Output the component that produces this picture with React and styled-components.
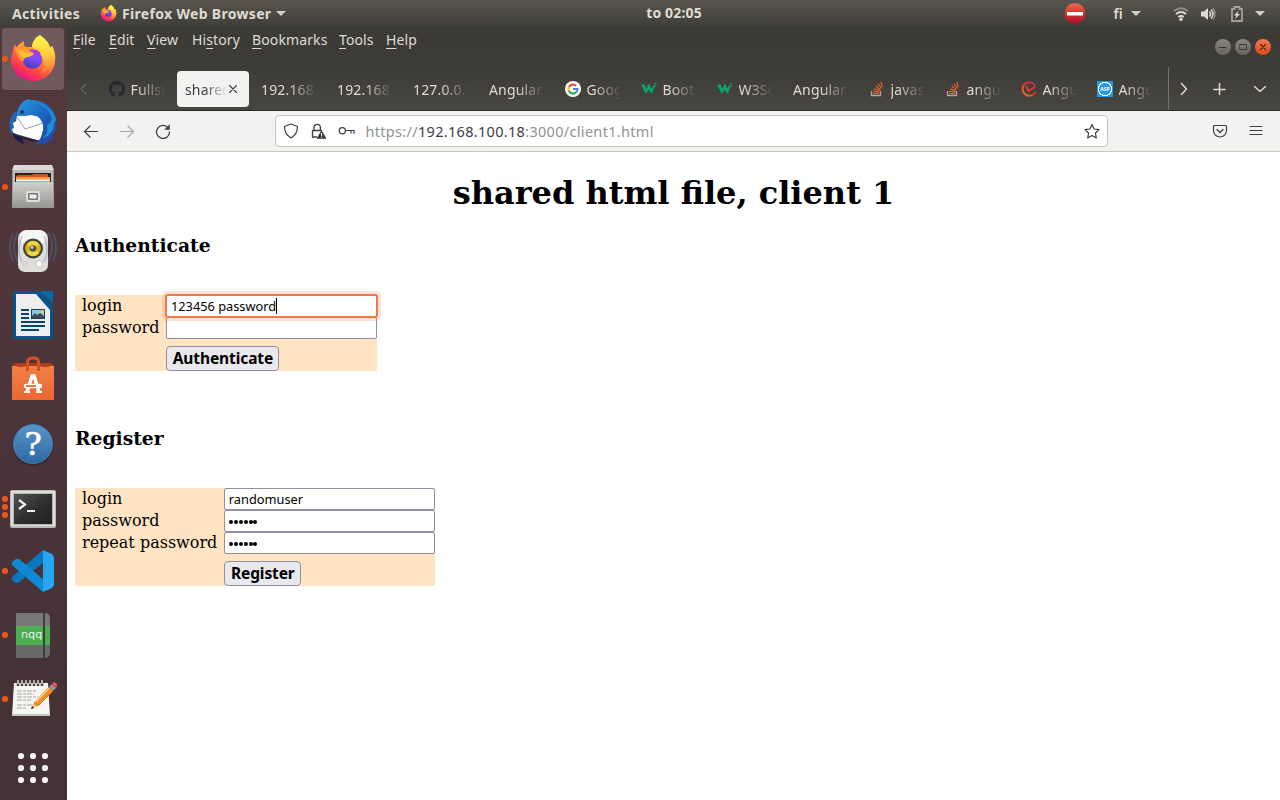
import React from "react";
import styled, { createGlobalStyle } from "styled-components";

const ui = `"Noto Sans", "Open Sans", sans-serif`;

const GlobalStyle = createGlobalStyle`
  *, *::before, *::after { box-sizing: border-box; }
  body { margin: 0; overflow: hidden; background: #fff; font-family: ${ui}; }
  svg { display: block; flex: none; }
`;

const Desktop = styled.div`
  display: flex;
  flex-direction: column;
  width: 1280px;
  height: 800px;
`;

/* ---------- top panel ---------- */
const TopPanel = styled.header`
  display: grid;
  grid-template-columns: 1fr auto 1fr;
  height: 27px;
  background: linear-gradient(#58554c, #3f3e39);
  color: #dfdbd2;
  font: 700 14px/27px ${ui};
`;
const PanelGroup = styled.div`
  display: flex;
  align-items: center;
  justify-content: ${(p) => (p.$end ? "flex-end" : "flex-start")};
  padding: ${(p) => (p.$end ? "0 15px 0 0" : "0 0 0 12px")};
`;
const PanelText = styled.span`
  white-space: nowrap;
  letter-spacing: ${(p) => p.$track || 0}px;
  margin-left: ${(p) => p.$left || 0}px;
  font-weight: ${(p) => p.$weight || 700};
`;
const Clock = styled(PanelText)`
  margin-left: 68px;
  line-height: 26px;
`;
const Caret = styled.i`
  margin-left: ${(p) => p.$left}px;
  border: 5px solid transparent;
  border-top-color: #d3cfc6;
  border-bottom: 0;
`;
const Spacer = styled.span`
  flex: none;
  width: ${(p) => p.$w}px;
`;

/* ---------- dock ---------- */
const Body = styled.div`
  display: flex;
  flex: 1;
  min-height: 0;
`;
const Dock = styled.nav`
  display: flex;
  flex-direction: column;
  width: 67px;
  background: linear-gradient(175deg, #54393b, #4a3439 55%, #423136);
`;
const Slot = styled.div`
  position: relative;
  display: flex;
  align-items: center;
  justify-content: center;
  height: 62px;
  width: 62px;
  flex: none;
  margin: 1px 0 1px 2px;
  border-radius: 4px;
  background: ${(p) => (p.$active ? "#705a5d" : "transparent")};
  &:last-child { margin-top: auto; }
`;
const Dots = styled.div`
  position: absolute;
  left: 0;
  top: 0;
  height: 100%;
  display: flex;
  flex-direction: column;
  justify-content: center;
  gap: 2.5px;
`;
const Dot = styled.i`
  width: 5.6px;
  height: 5.6px;
  border-radius: 50%;
  background: #e95420;
`;

/* ---------- browser ---------- */
const Browser = styled.main`
  display: flex;
  flex-direction: column;
  flex: 1;
  min-width: 0;
`;
const Chrome = styled.div`
  height: 84px;
  background: linear-gradient(#3b3a35, #3e3c38 50%, #474640);
  border-bottom: 1px solid #2b2a27;
`;
const MenuRow = styled.div`
  display: flex;
  justify-content: space-between;
  height: 40px;
  padding: 1px 9px 0 6px;
`;
const MenuList = styled.div`
  display: flex;
  color: #dfdbd2;
  font: 14px/23px ${ui};
`;
const MenuItem = styled.span`
  width: ${(p) => p.$w}px;
  white-space: nowrap;
  letter-spacing: 0.12px;
  u { text-underline-offset: 3px; text-decoration-thickness: 1px; text-decoration-skip-ink: none; }
`;
const WindowButtons = styled.div`
  display: flex;
  gap: 4px;
  padding-top: 11px;
`;
const WindowButton = styled.span`
  display: grid;
  place-items: center;
  width: 16px;
  height: 16px;
  border-radius: 50%;
  background: ${(p) => (p.$close ? "linear-gradient(#f27a54, #dc4814)" : "linear-gradient(#8a877e, #65635c)")};
`;
const TabStrip = styled.div`
  display: flex;
  align-items: center;
  height: 43px;
`;
const StripButton = styled.span`
  display: grid;
  place-items: center;
  width: ${(p) => p.$w}px;
  height: 43px;
`;
const Divider = styled.i`
  width: 1px;
  height: 43px;
  margin-left: 3px;
  background: #74726b;
`;
const Tab = styled.div`
  display: flex;
  align-items: center;
  flex: none;
  width: 72px;
  height: 36px;
  margin-right: 4px;
  padding: 0 8px;
  border-radius: 4px;
  background: ${(p) => (p.$active ? "#f3f2f1" : "transparent")};
  color: ${(p) => (p.$active ? "#3d3d3d" : "#dfdbd2")};
`;
const TabLabel = styled.span`
  flex: 1;
  min-width: 0;
  margin-left: ${(p) => (p.$icon ? 5.5 : 0)}px;
  margin-right: ${(p) => (p.$active ? -3 : 0)}px;
  padding-top: 2px;
  overflow: hidden;
  white-space: nowrap;
  font: 14px/20px ${ui};
  letter-spacing: 0.15px;
  mask-image: linear-gradient(to left, transparent, #000 ${(p) => (p.$active ? 24 : 28)}px);
`;
const NavBar = styled.div`
  display: flex;
  align-items: center;
  height: 41px;
  padding: 0 12px 0 16px;
  background: #f3f2f1;
  border-bottom: 1px solid #c9c7c4;
`;
const UrlBox = styled.div`
  display: flex;
  align-items: center;
  width: 833px;
  height: 32px;
  margin: 0 104px 0 104px;
  padding: 0 7px;
  background: #fff;
  border: 1px solid #c4c1bd;
  border-radius: 4px;
`;
const Url = styled.span`
  flex: 1;
  margin-left: 10.5px;
  color: #919191;
  font: 14.5px/19px ${ui};
  letter-spacing: 0.31px;
  b { color: #3d3d3d; font-weight: 400; }
`;

/* ---------- page ---------- */
const Page = styled.section`
  flex: 1;
  padding: 0 8px;
  background: #fff;
  color: #000;
  font: 16px/19px "DejaVu Serif", serif;
`;
const Title = styled.h1`
  margin: 22px 0;
  text-align: center;
  font-size: 32px;
  line-height: 38px;
`;
const Subtitle = styled.h3`
  margin: 0;
  padding: ${(p) => p.$top || 0}px 0 38px;
  font-size: 18.72px;
  line-height: 23px;
`;
const FormGrid = styled.div`
  display: grid;
  grid-template-columns: auto 211px;
  width: max-content;
  background: #ffe4c4;
`;
const FieldLabel = styled.label`
  height: 22px;
  padding: 0 7px;
  line-height: 21px;
`;
const Field = styled.div`
  display: flex;
  align-items: center;
  height: 22px;
  padding: 0 4px 0 3.5px;
  background: #fff;
  border: 1px solid #8f8f9d;
  border-radius: 2px;
  font: 12.8px/16px ${ui};
  ${(p) => p.$focus && `
    position: relative;
    border-color: #f0774a;
    box-shadow: 0 0 0 1px #f0774a, 0 0 0 4px rgba(240, 119, 70, 0.22);
  `}
`;
const TextCursor = styled.i`
  width: 1px;
  height: 16px;
  background: #000;
`;
const Bullets = styled.span`
  display: flex;
  gap: 0.8px;
  padding: 1px 0 0 0.5px;
  i { width: 4px; height: 4px; border-radius: 50%; background: #000; }
`;
const Submit = styled.button`
  grid-column: 2;
  justify-self: start;
  width: ${(p) => p.$w}px;
  height: 25px;
  margin: 7px 0 0;
  padding: 0;
  background: #e9e9ed;
  border: 1px solid #8f8f9d;
  border-radius: 4px;
  color: #000;
  font: 700 15.5px/21px ${ui};
  letter-spacing: -0.1px;
  white-space: nowrap;
`;

/* ---------- drawings ---------- */
const Firefox = ({ size, id }) => (
  <svg width={size} height={size} viewBox="0 0 48 48">
    <defs>
      <linearGradient id={`${id}a`} x1=".85" y1=".1" x2=".35" y2="1">
        <stop offset="0" stopColor="#fff44f" /><stop offset=".3" stopColor="#ffa53a" />
        <stop offset=".55" stopColor="#ff7139" /><stop offset=".8" stopColor="#ff3750" /><stop offset="1" stopColor="#e31587" />
      </linearGradient>
      <linearGradient id={`${id}b`} x1=".7" y1="0" x2=".4" y2="1">
        <stop offset="0" stopColor="#b833e1" /><stop offset=".5" stopColor="#7b4df5" /><stop offset="1" stopColor="#4a3ab5" />
      </linearGradient>
      <linearGradient id={`${id}c`} x1=".5" y1="0" x2=".6" y2="1">
        <stop offset="0" stopColor="#fff44f" /><stop offset=".5" stopColor="#ffcf3f" /><stop offset="1" stopColor="#ff6a3c" />
      </linearGradient>
    </defs>
    <path fill={`url(#${id}a)`} d="M4 17C4 13 5 11 6 9L7 13C9 10 12 8 15 6 14 9 15 11 17 12L23 12C23 7 27 2 31 0 34 3 39 6 41 13L43 11C46 16 47 22 46 27 45 38 35 46 24 46 11 46 2 36 2 25 2 22 3 19 4 17z" />
    <path fill={`url(#${id}c)`} d="M31 0C34 3 40 6 41 13L43 11C46 17 47 25 43 31 40 36 36 38 31 39 36 34 36 26 33 19 31 15 27 13 23 12 23 7 27 2 31 0z" />
    <circle cx="23.500" cy="24" r="9.800" fill={`url(#${id}b)`} />
    <path fill="#ffcf3e" d="M24 14.500c2-1 5-1 8 4l-1 .5c2 2 3 4 3 7 0 0 3-6-1-11l-6-3z" />
    <path fill="#ff9a2e" d="M6 11L7 13C9 10 12 8 15 6 14 9 15 11 17 13L25 18.500C24 21 20 22 16 22.500L13.500 27C10 24 7 19 6 11z" />
    <path fill="#ffbf36" d="M9 15c3 1 4 0 7 2 3 1 6 1 9 2-3 3-7 2-9 4-3-1-6-4-7-8z" />
  </svg>
);
const Thunderbird = () => (
  <svg width="50" height="50" viewBox="0 0 50 50">
    <defs><linearGradient id="tb" x2="1" y2="1"><stop stopColor="#2a9be0" /><stop offset=".5" stopColor="#1b63bf" /><stop offset="1" stopColor="#2440a0" /></linearGradient></defs>
    <path fill="#2563bb" d="M8 13C2 18 0 25 2 32l3 6 2-2-1-13 6-4z" />
    <path fill="#fbfbfb" d="m9 18 8-2 18 3 1 10-4 14L5 35l-1-4 2-1-1-5 3-2z" />
    <path d="m9 19 8 12 18-6" stroke="#9ea4ad" fill="none" />
    <path fill="#1b1a4b" d="m4 34 6 4 23 5-3 1-5-2 1 2-12-4 2 6C11 44 5 40 4 34z" />
    <path fill="url(#tb)" d="M9 18C9 9 14 3 20 1l3 1c14 0 25 9 26 22l-2-1 1 8-3 6-1 5-4 1-4 4-2-2-8 2C32 43 36 36 35 27 33 18 26 15 18 18z" />
    <path fill="#238dd4" d="M25 4c12 3 18 9 19 18l-5 6c1 5-1 9-4 13 8-5 11-9 11-16l2-3C46 12 37 5 25 4z" />
    <circle cx="14" cy="14" r="2" fill="#253153" />
  </svg>
);
const Files = () => (
  <svg width="46" height="48" viewBox="0 0 46 48">
    <defs><linearGradient id="fl" y2="1" x2="0"><stop stopColor="#cfcfcd" /><stop offset="1" stopColor="#949492" /></linearGradient></defs>
    <path d="M4 3h38l2 5v37H2V8z" fill="#929290" /><path d="M4 2h38l2 5H2z" fill="#d9d9d7" />
    <path d="M3 7h40v12H3z" fill="#bcbcba" /><path d="M5 10h36v9H5z" fill="#242321" />
    <path d="M8 12h14l1-1h15v8H6v-6z" fill="#cf561b" /><path d="M6 14h34v5H6z" fill="#f29c43" /><path d="M6 16.500h34v1.500H6z" fill="#fff0dc" />
    <path d="M3 19h40l1 26H2z" fill="url(#fl)" /><rect x="16" y="28" width="14" height="11" rx="2" fill="#deded9" />
    <rect x="18" y="30" width="10" height="7" rx="1" fill="#777" /><rect x="19.5" y="31.5" width="7" height="4" fill="#eee" />
  </svg>
);
const Speaker = () => (
  <svg width="48" height="46" viewBox="0 0 48 46">
    <g fill="none" stroke="#52658a" strokeWidth="2" opacity=".5"><path d="M4 5Q-2 19 4 33M9 4Q1 19 9 34M44 5q6 14 0 28M39 4q8 15 0 30" /></g>
    <rect x="9" y="3" width="30" height="41" rx="7" fill="#dededb" /><rect x="11" y="2" width="26" height="14" rx="6" fill="#f5f5f3" />
    <g fill="none" stroke="#7d91b5" strokeWidth="1.500" opacity=".45"><path d="M13 8q-6 13 0 26M35 8q6 13 0 26" /></g>
    <circle cx="24" cy="20.500" r="10" fill="#424331" /><circle cx="24" cy="20.500" r="7.800" fill="#d5b51f" /><path d="M18 16.500a7 7 0 0 1 12 0l-6 4zM18 24.500a7 7 0 0 0 12 0l-6-4z" fill="#f1d747" />
    <circle cx="24" cy="20.500" r="3.300" fill="#56554a" /><circle cx="23" cy="19.500" r="1.400" fill="#d4d4cd" />
    <circle cx="30" cy="36" r="3.400" fill="#fff" stroke="#c2c2bd" /><path d="M14 34h4v4h-4z" fill="none" stroke="#cecec7" />
  </svg>
);
const Writer = () => (
  <svg width="40" height="48" viewBox="0 0 40 48">
    <path d="M2 0h25l13 15v31q0 2-2 2H2q-2 0-2-2V2q0-2 2-2z" fill="#07568a" /><path d="M27 0h13v13z" fill="#0668a4" /><path d="M3 3h20l14 16v26H3z" fill="#eee" />
    <path d="M8 19h8M8 23h8M8 27h8M8 31h24M8 35h24M8 39h18" stroke="#06456f" strokeWidth="2" />
    <path d="M18 18h14v10H18z" fill="#06456f" /><path d="M19 19h12v8H19z" fill="#92c7e4" /><circle cx="29.5" cy="20.5" r="1.7" fill="#f4ca3b" /><path d="M19 27v-2l3-3 2 2 3-2 4 3v2z" fill="#414a4d" />
  </svg>
);
const Software = () => (
  <svg width="42" height="46" viewBox="0 0 42 46">
    <defs><linearGradient id="sw" x2="0" y2="1"><stop stopColor="#ee8145" /><stop offset="1" stopColor="#ed6634" /></linearGradient></defs>
    <path d="m0 10 3-3h36l3 3v6H0z" fill="#a93b17" /><path d="M0 10h42v34H0z" fill="url(#sw)" /><path d="M5 8h8v3H5zM29 8h8v3h-8z" fill="#b5441c" />
    <path d="M15.500 15V6q0-4 5.500-4t5.500 4v9" fill="none" stroke="#d85021" strokeWidth="3" />
    <path d="m15 36 5-16h2l5 16" fill="none" stroke="#fff" strokeWidth="3.500" /><path d="M14 30h14" stroke="#fff" strokeWidth="4.500" strokeLinecap="round" /><path d="M14 30h10" stroke="#ed743d" strokeWidth="2" /><path d="M12 36h6m6 0h6" stroke="#fff" strokeWidth="2" />
  </svg>
);
const HelpBall = styled.span`
  display: grid;
  place-items: center;
  width: 40px;
  height: 40px;
  margin-top: 2px;
  border-radius: 50%;
  border: 1px solid #3f7db5;
  background: linear-gradient(#5794c8, #2e6aa2);
  box-shadow: 0 1px 2px #0006;
  color: #fff;
  font: 400 32px/38px "DejaVu Serif", serif;
  -webkit-text-stroke: 0.7px #fff;
`;
const Terminal = () => (
  <svg width="46" height="41" viewBox="0 -3 46 41">
    <defs><linearGradient id="tm" x2="1" y2="1"><stop stopColor="#555" /><stop offset=".5" stopColor="#303030" /><stop offset="1" stopColor="#202020" /></linearGradient></defs>
    <rect width="46" height="38" rx="2" fill="#b9b9b5" /><rect x="1" y="1" width="44" height="35" rx="1" fill="#dededb" /><path d="M3 3h40v32H3z" fill="#b2b2ae" /><path d="M4 4h38v30H4z" fill="url(#tm)" />
    <path d="m9 10 6 4.500-6 4.500M17 21h8" fill="none" stroke="#f1f1ee" strokeWidth="2.200" />
  </svg>
);
const VSCode = () => (
  <svg width="42" height="42" viewBox="0 0 42 42">
    <path d="M31 0 0 27v3l3 3 3 0 25-20z" fill="#0877bd" /><path d="m1 11 3-2 3 0 24 20v13L0 15v-2z" fill="#1088d2" /><path d="m31 0 9 4 2 3v28l-2 3-9 4z" fill="#27a7f3" />
  </svg>
);
const NqqBook = styled.span`
  display: flex;
  align-items: center;
  width: 34px;
  height: 45px;
  padding: 0 0 0 5px;
  border-radius: 1px 5px 5px 1px;
  background: linear-gradient(90deg, transparent 27px, #3d3d3d 27px 29px, transparent 29px),
    linear-gradient(#787878 13px, #4cae50 13px 32px, #696969 32px);
  color: #eee;
  font: 11.2px/14px "DejaVu Sans", sans-serif;
`;
const Notes = () => (
  <svg width="50" height="38" viewBox="-4 0 50 38">
    <path d="M2 3h34l2 33H0z" fill="#f5f5f2" /><path d="M0 34h38v2H0z" fill="#c8c8c3" />
    <path d="M6 1v5m4-5v5m4-5v5m4-5v5m4-5v5m4-5v5m4-5v5" stroke="#4b4848" strokeWidth="2.500" /><path d="M6 0v4m4-4v4m4-4v4m4-4v4m4-4v4m4-4v4m4-4v4" stroke="#e8e8e5" strokeWidth="1.300" />
    <path d="M5 11h19M5 14h17M5 17h21M5 20h14M5 25h15M5 28h10" stroke="#a5a5a3" strokeDasharray="5 1 3 1" />
    <path d="m20 28 3-6L37 7l4 4-14 14z" fill="#f18c22" stroke="#bd6514" strokeWidth=".7" /><path d="m24 22 13-14" stroke="#ffd185" strokeWidth="1.500" /><path d="m37 7 3-3 4 4-3 3z" fill="#8a989e" /><path d="m40 4 2-2q4 1 3 4l-1 2z" fill="#e75354" /><path d="m20 28 2-4 3 3z" fill="#efd49f" /><path d="m19 29 1-3 2 2z" fill="#222" />
  </svg>
);
const AppGrid = () => (
  <svg width="32" height="32" viewBox="0 0 32 32" fill="#f5f2f2">
    {[4, 16, 28].map((y) => [4, 16, 28].map((x) => <circle key={`${x}${y}`} cx={x} cy={y} r="3.100" />))}
  </svg>
);
const Line = ({ size = 16, d, color = "#3d3d3d", width = 1.2, children, h }) => (
  <svg width={size} height={h || size} viewBox={`0 0 ${size} ${h || size}`} fill="none" stroke={color} strokeWidth={width} strokeLinecap="round" strokeLinejoin="round">
    <path d={d} />{children}
  </svg>
);
const GitHub = () => (
  <svg width="16" height="16" viewBox="0 0 16 16" fill="#24292f"><path d="M8 0C3.580 0 0 3.580 0 8c0 3.540 2.290 6.530 5.470 7.590.4.070.550-.170.550-.380 0-.190-.010-.820-.010-1.490-2.010.370-2.530-.490-2.690-.940-.090-.230-.480-.940-.820-1.130-.280-.150-.680-.520-.010-.530.630-.010 1.080.580 1.230.820.720 1.210 1.870.870 2.330.660.070-.520.280-.870.510-1.070-1.780-.2-3.640-.890-3.640-3.950 0-.870.310-1.590.820-2.150-.080-.2-.360-1.020.080-2.120 0 0 .670-.210 2.200.820a7.600 7.600 0 0 1 4 0c1.530-1.040 2.200-.820 2.200-.820.440 1.100.160 1.920.080 2.120.510.560.820 1.270.820 2.150 0 3.070-1.870 3.750-3.650 3.950.290.250.540.730.540 1.480 0 1.070-.010 1.930-.010 2.200 0 .210.150.460.550.380A8 8 0 0 0 16 8c0-4.420-3.580-8-8-8z" /></svg>
);
const Google = () => (
  <svg width="16" height="16" viewBox="0 0 16 16" fill="none" strokeWidth="2.200">
    <circle cx="8" cy="8" r="8" fill="#fff" /><path d="M11.200 4.800A4.500 4.500 0 0 0 4 6" stroke="#ea4335" /><path d="M4.100 5.800a4.500 4.500 0 0 0 0 4.400" stroke="#fbbc05" /><path d="M4 10a4.500 4.500 0 0 0 7 1.400" stroke="#34a853" /><path d="M8 8h4.500q0 2-1.500 3.400" stroke="#4285f4" />
  </svg>
);
const W3 = () => (
  <svg width="16" height="16" viewBox="0 0 16 16" fill="none" stroke="#0aa66d">
    <path d="M0 3.500h3.500L5.500 8 7 3.500h1.500L10.500 8l1.500-3.500h1.800L10.800 13 7.500 8.500 4.800 13z" fill="#0aa66d" stroke="none" /><path d="M13 2.300h1.800l-1 1.400q1.800.1 1 1.600L13 5.500" strokeWidth=".8" />
  </svg>
);
const StackIcon = () => (
  <svg width="16" height="16" viewBox="0 0 16 16" fill="none">
    <path d="M2.500 10v4.500h9V10" stroke="#a6a9ac" strokeWidth="1.300" /><path d="M4 12.500h6M4.200 10.300l6 .8M5 7.700l5.600 2.200M6.700 5l4.700 3.700M9 2.700l3.500 4.800M12 1l1.200 5" stroke="#e8622a" strokeWidth="1.200" />
  </svg>
);
const Educba = () => (
  <svg width="16" height="16" viewBox="0 0 16 16" fill="none" strokeLinecap="round" strokeLinejoin="round">
    <defs><linearGradient id="ed" x1="1" x2="0" y2="1"><stop stopColor="#c8285f" /><stop offset=".5" stopColor="#ee302d" /><stop offset="1" stopColor="#f4812a" /></linearGradient></defs>
    <path d="M14.500 11.500C12 15 7 16 3.700 12.800 0 9 1.500 2.500 7 1.500c3.500-.5 6.500 1 7 4.500L7.500 10 5.500 5.500" stroke="url(#ed)" strokeWidth="1.900" />
  </svg>
);
const AspBadge = styled.span`
  display: grid;
  place-items: center;
  flex: none;
  width: 16px;
  height: 16px;
  background: radial-gradient(circle, #2196ed 5.800px, #fff 6.200px 7px, #2196ed 7.400px);
  color: #fff;
  font: 700 5px/16px ${ui};
`;

const dock = [
  { icon: <Firefox size={48} id="dock" />, dots: 1, active: true },
  { icon: <Thunderbird />, dots: 0 },
  { icon: <Files />, dots: 1 },
  { icon: <Speaker />, dots: 0 },
  { icon: <Writer />, dots: 0 },
  { icon: <Software />, dots: 0 },
  { icon: <HelpBall>?</HelpBall>, dots: 0 },
  { icon: <Terminal />, dots: 3 },
  { icon: <VSCode />, dots: 1 },
  { icon: <NqqBook>nqq</NqqBook>, dots: 1 },
  { icon: <Notes />, dots: 1 },
  { icon: <AppGrid />, dots: 0 },
];
const tabs = [
  { icon: <GitHub />, label: "Fullst" },
  { label: "shared", active: true },
  { label: "192.168." },
  { label: "192.168." },
  { label: "127.0.0.1" },
  { label: "Angular." },
  { icon: <Google />, label: "Goog" },
  { icon: <W3 />, label: "Boots" },
  { icon: <W3 />, label: "W3Sc" },
  { label: "Angular" },
  { icon: <StackIcon />, label: "javas" },
  { icon: <StackIcon />, label: "angu" },
  { icon: <Educba />, label: "Angu" },
  { icon: <AspBadge>ASP</AspBadge>, label: "Angu" },
];
const menus = [
  ["", "F", "ile", 36], ["", "E", "dit", 38], ["", "V", "iew", 45], ["Hi", "s", "tory", 60],
  ["", "B", "ookmarks", 87], ["", "T", "ools", 47], ["", "H", "elp", 40],
];

export default function App() {
  return (
    <Desktop>
      <GlobalStyle />
      <TopPanel>
        <PanelGroup>
          <PanelText $track={0.3}>Activities</PanelText>
          <Spacer $w={20} />
          <Firefox size={17} id="panel" />
          <PanelText $left={5} $track={0.32}>Firefox Web Browser</PanelText>
          <Caret $left={5} />
        </PanelGroup>
        <Clock $track={0.15}>to 02:05</Clock>
        <PanelGroup $end>
          <svg width="22" height="22" viewBox="0 0 22 22">
            <defs><linearGradient id="stop" x2="0" y2="1"><stop stopColor="#ef6b50" /><stop offset=".5" stopColor="#d3322d" /><stop offset="1" stopColor="#a51032" /></linearGradient></defs>
            <circle cx="11" cy="10.500" r="10.500" fill="url(#stop)" /><rect x="3" y="9" width="16" height="3.500" fill="#fff" />
          </svg>
          <PanelText $left={27} $weight={600} $track={0.2}>fi</PanelText>
          <Caret $left={8} />
          <Spacer $w={32} />
          <svg width="16" height="16" viewBox="0 0 16 16" fill="none" stroke="#dfdbd2" strokeWidth="2">
            <path d="M1 5q7-5.500 14 0" stroke="#8c8a83" /><path d="M3 8q5-4 10 0M5.300 11q2.700-2 5.400 0" />
            <circle cx="8" cy="13.300" r="1.700" fill="#dfdbd2" stroke="none" />
          </svg>
          <Spacer $w={11} />
          <svg width="16" height="16" viewBox="0 0 16 16" fill="none" stroke="#dfdbd2" strokeWidth="1.500">
            <path d="M1 5.500h3L8 2v12l-4-3.500H1z" fill="#dfdbd2" stroke="none" /><path d="M9.500 5.500q2 2.500 0 5M11 3.500q4 4.500 0 9" /><path d="M13 2q4 6 0 12" stroke="#8c8a83" />
          </svg>
          <Spacer $w={13} />
          <svg width="16" height="16" viewBox="0 0 16 16" fill="none" stroke="#a3a098" strokeWidth="1.800">
            <path d="M3 3h2.500V1h5v2H13v12H3z" /><path d="M9.500 4.500 5 9.500h2.500L6 13l5-5H8.500z" fill="#dfdbd2" stroke="none" />
          </svg>
          <Caret $left={10} />
        </PanelGroup>
      </TopPanel>
      <Body>
        <Dock>
          {dock.map((d, i) => (
            <Slot key={i} $active={d.active}>
              <Dots>{Array.from({ length: d.dots }, (_, k) => <Dot key={k} />)}</Dots>
              {d.icon}
            </Slot>
          ))}
        </Dock>
        <Browser>
          <Chrome>
            <MenuRow>
              <MenuList>
                {menus.map(([a, u, b, w]) => <MenuItem key={u} $w={w}>{a}<u>{u}</u>{b}</MenuItem>)}
              </MenuList>
              <WindowButtons>
                <WindowButton><Line size={8} d="M.5 4.500h7" color="#3b3a35" width={1} /></WindowButton>
                <WindowButton><Line size={8} d="M.5 1.500h7v5h-7z" color="#3b3a35" width={1} /></WindowButton>
                <WindowButton $close><Line size={8} d="m1.500 1.500 5 5m0-5-5 5" color="#4c241a" width={1.2} /></WindowButton>
              </WindowButtons>
            </MenuRow>
            <TabStrip>
              <StripButton $w={34}><Line d="m10 3-5 5 5 5" color="#6b6963" /></StripButton>
              {tabs.map((t, i) => (
                <Tab key={i} $active={t.active}>
                  {t.icon}
                  <TabLabel $icon={!!t.icon} $active={t.active}>{t.label}</TabLabel>
                  {t.active && <Line d="m4.500 4.500 7 7m0-7-7 7" width={1.1} />}
                </Tab>
              ))}
              <Divider />
              <StripButton $w={30}><Line d="m5.500 2.500 5 5.500-5 5.500" color="#dfdbd2" width={1.5} /></StripButton>
              <StripButton $w={41}><Line d="M7.500 2.500v11M2 8.500h11" color="#dfdbd2" width={1.5} /></StripButton>
              <StripButton $w={40}><Line d="m2.500 5.500 5.500 5 5.500-5" color="#dfdbd2" width={1.4} /></StripButton>
            </TabStrip>
          </Chrome>
          <NavBar>
            <Line d="M14.500 8.500h-13M7 3 1.500 8.500 7 14" />
            <Spacer $w={20} />
            <Line d="M1.500 8.500h13M9 3l5.500 5.500L9 14" color="#a9a8a7" />
            <Spacer $w={20} />
            <Line d="M13 4.800A6.500 6.500 0 1 0 14.500 9" width={1.3}><path d="M14.500 2v4.500H10z" fill="#3d3d3d" strokeWidth=".5" /></Line>
            <UrlBox>
              <Line d="M8 1 14.500 3.500C14.500 9 12.500 12.500 8 15 3.500 12.500 1.500 9 1.500 3.500z" />
              <Spacer $w={11} />
              <Line d="M6.500 14H2.500V7.500h9M4 7.500V4.500a3.200 3.200 0 0 1 6.400 0v3" width={1.3}>
                <path d="m11.500 8.500 4 6.700h-8z" fill="#3d3d3d" /><path d="M11.500 10.500v2M11.500 14v.2" stroke="#fff" strokeWidth="1" />
              </Line>
              <Spacer $w={12} />
              <Line size={17} h={16} d="M7.500 7.500H16v3M13 7.500V10"><circle cx="4.300" cy="7.800" r="3.100" /></Line>
              <Url>https://<b>192.168.100.18</b>:3000/client1.html</Url>
              <Line d="m8 1.500 2.100 4.500 4.900.6-3.600 3.400.9 5L8 12.600l-4.300 2.400.9-5L1 6.600l4.900-.6z" />
            </UrlBox>
            <Line d="M2.500 2.500h11q1 0 1 1V7.500A6.500 6.500 0 0 1 1.500 7.500V3.500q0-1 1-1zM5 6.500l3 3 3-3" />
            <Spacer $w={20} />
            <Line d="M2 3.500h12M2 7.500h12M2 11.500h12" />
          </NavBar>
          <Page>
            <Title>shared html file, client 1</Title>
            <Subtitle>Authenticate</Subtitle>
            <FormGrid>
              <FieldLabel>login</FieldLabel>
              <Field $focus>123456 password<TextCursor /></Field>
              <FieldLabel>password</FieldLabel>
              <Field />
              <Submit $w={113}>Authenticate</Submit>
            </FormGrid>
            <Subtitle $top={56}>Register</Subtitle>
            <FormGrid>
              <FieldLabel>login</FieldLabel>
              <Field>randomuser</Field>
              {["password", "repeat password"].map((label) => (
                <React.Fragment key={label}>
                  <FieldLabel>{label}</FieldLabel>
                  <Field><Bullets><i /><i /><i /><i /><i /><i /></Bullets></Field>
                </React.Fragment>
              ))}
              <Submit $w={77}>Register</Submit>
            </FormGrid>
          </Page>
        </Browser>
      </Body>
    </Desktop>
  );
}
